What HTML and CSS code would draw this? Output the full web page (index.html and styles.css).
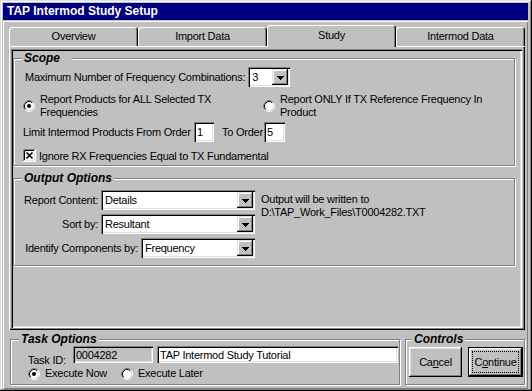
FILE: index.html
```html
<!DOCTYPE html>
<html lang="en">
<head>
    <meta charset="UTF-8">
    <title>TAP Intermod Study Setup</title>
    <link rel="stylesheet" href="styles.css">
</head>
<body>
<div class="window">
    <div class="titlebar">TAP Intermod Study Setup</div>
    <div class="client">
        <div class="tabs">
            <div class="tab">Overview</div>
            <div class="tab">Import Data</div>
            <div class="tab active">Study</div>
            <div class="tab">Intermod Data</div>
        </div>
        <div class="tabpage">
            <div class="page-frame">
                <div class="group scope">
                    <span class="group-title">Scope</span>
                    <div class="row combo-row">
                        <span class="max-label">Maximum Number of Frequency Combinations:</span>
                        <div class="combo w-small">
                            <span class="combo-text">3</span>
                            <span class="drop"><svg width="7" height="4" viewBox="0 0 7 4"><path d="M0 0h7v1h-1v1h-1v1h-1v1h-1v-1h-1v-1h-1v-1h-1z"/></svg></span>
                        </div>
                    </div>
                    <div class="row radio-row">
                        <label class="radio first">
                            <svg class="radio-icon" width="12" height="12" viewBox="0 0 12 12"><circle cx="6" cy="6" r="4.5" fill="#fff"/><path d="M2.11 9.89A5.5 5.5 0 0 1 9.89 2.11" stroke="#808080" fill="none"/><path d="M9.89 2.11A5.5 5.5 0 0 1 2.11 9.89" stroke="#fff" fill="none"/><path d="M2.82 9.18A4.5 4.5 0 0 1 9.18 2.82" stroke="#000" fill="none"/><path d="M9.18 2.82A4.5 4.5 0 0 1 2.82 9.18" stroke="#dfdfdf" fill="none"/><circle cx="6" cy="6" r="2" fill="#000"/></svg>
                            <span>Report Products for ALL Selected TX<br>Frequencies</span>
                        </label>
                        <label class="radio">
                            <svg class="radio-icon" width="12" height="12" viewBox="0 0 12 12"><circle cx="6" cy="6" r="4.5" fill="#fff"/><path d="M2.11 9.89A5.5 5.5 0 0 1 9.89 2.11" stroke="#808080" fill="none"/><path d="M9.89 2.11A5.5 5.5 0 0 1 2.11 9.89" stroke="#fff" fill="none"/><path d="M2.82 9.18A4.5 4.5 0 0 1 9.18 2.82" stroke="#000" fill="none"/><path d="M9.18 2.82A4.5 4.5 0 0 1 2.82 9.18" stroke="#dfdfdf" fill="none"/></svg>
                            <span>Report ONLY If TX Reference Frequency In<br>Product</span>
                        </label>
                    </div>
                    <div class="row order-row">
                        <span class="from-label">Limit Intermod Products From Order</span>
                        <span class="textbox order-box">1</span>
                        <span class="to-label">To Order</span>
                        <span class="textbox order-box wide">5</span>
                    </div>
                    <div class="row check-row">
                        <svg class="check-icon" width="13" height="13" viewBox="0 0 13 13"><rect x="0" y="0" width="13" height="13" fill="#fff"/><path d="M0.5 12V0.5H12" stroke="#808080" fill="none"/><path d="M1.5 11V1.5H11" stroke="#000" fill="none"/><path d="M0 12.5H12.5V0" stroke="#fff" fill="none"/><path d="M1 11.5H11.5V1" stroke="#dfdfdf" fill="none"/><path d="M3.5 3.5L9.5 9.5M9.5 3.5L3.5 9.5" stroke="#000" stroke-width="1.7"/></svg>
                        <span>Ignore RX Frequencies Equal to TX Fundamental</span>
                    </div>
                </div>

                <div class="group output">
                    <span class="group-title">Output Options</span>
                    <div class="output-fields">
                        <div class="row field-row">
                            <span>Report Content:</span>
                            <div class="combo w-wide">
                                <span class="combo-text">Details</span>
                                <span class="drop"><svg width="7" height="4" viewBox="0 0 7 4"><path d="M0 0h7v1h-1v1h-1v1h-1v1h-1v-1h-1v-1h-1v-1h-1z"/></svg></span>
                            </div>
                        </div>
                        <div class="row field-row">
                            <span>Sort by:</span>
                            <div class="combo w-wide">
                                <span class="combo-text">Resultant</span>
                                <span class="drop"><svg width="7" height="4" viewBox="0 0 7 4"><path d="M0 0h7v1h-1v1h-1v1h-1v1h-1v-1h-1v-1h-1v-1h-1z"/></svg></span>
                            </div>
                        </div>
                        <div class="row field-row">
                            <span>Identify Components by:</span>
                            <div class="combo w-mid">
                                <span class="combo-text">Frequency</span>
                                <span class="drop"><svg width="7" height="4" viewBox="0 0 7 4"><path d="M0 0h7v1h-1v1h-1v1h-1v1h-1v-1h-1v-1h-1v-1h-1z"/></svg></span>
                            </div>
                        </div>
                    </div>
                    <div class="output-note">Output will be written to<br>D:\TAP_Work_Files\T0004282.TXT</div>
                </div>
            </div>
        </div>

        <div class="bottom">
            <div class="group task">
                <span class="group-title">Task Options</span>
                <div class="row task-row">
                    <span class="task-label">Task ID:</span>
                    <span class="textbox task-id">0004282</span>
                    <span class="textbox task-name">TAP Intermod Study Tutorial</span>
                </div>
                <div class="row exec-row">
                    <label class="radio exec-now">
                        <svg class="radio-icon" width="12" height="12" viewBox="0 0 12 12"><circle cx="6" cy="6" r="4.5" fill="#fff"/><path d="M2.11 9.89A5.5 5.5 0 0 1 9.89 2.11" stroke="#808080" fill="none"/><path d="M9.89 2.11A5.5 5.5 0 0 1 2.11 9.89" stroke="#fff" fill="none"/><path d="M2.82 9.18A4.5 4.5 0 0 1 9.18 2.82" stroke="#000" fill="none"/><path d="M9.18 2.82A4.5 4.5 0 0 1 2.82 9.18" stroke="#dfdfdf" fill="none"/><circle cx="6" cy="6" r="2" fill="#000"/></svg>
                        <span>Execute Now</span>
                    </label>
                    <label class="radio">
                        <svg class="radio-icon" width="12" height="12" viewBox="0 0 12 12"><circle cx="6" cy="6" r="4.5" fill="#fff"/><path d="M2.11 9.89A5.5 5.5 0 0 1 9.89 2.11" stroke="#808080" fill="none"/><path d="M9.89 2.11A5.5 5.5 0 0 1 2.11 9.89" stroke="#fff" fill="none"/><path d="M2.82 9.18A4.5 4.5 0 0 1 9.18 2.82" stroke="#000" fill="none"/><path d="M9.18 2.82A4.5 4.5 0 0 1 2.82 9.18" stroke="#dfdfdf" fill="none"/></svg>
                        <span>Execute Later</span>
                    </label>
                </div>
            </div>
            <div class="group controls">
                <span class="group-title">Controls</span>
                <button class="btn cancel" type="button">Ca<u>n</u>cel</button>
                <button class="btn default" type="button"><span class="focus">C<u>o</u>ntinue</span></button>
            </div>
        </div>
    </div>
</div>
</body>
</html>
```

FILE: styles.css
```css
body {
    margin: 0;
    font-family: "Liberation Sans", Arial, sans-serif;
    font-size: 11px;
    letter-spacing: -0.25px;
    color: #000;
    background-color: #c0c0c0;
    white-space: nowrap;
}

.window {
    width: 532px;
    height: 391px;
    box-sizing: border-box;
    padding: 3px 4px 2px 3px;
    background-color: #c0c0c0;
    box-shadow: inset -1px -1px #000, inset 1px 1px #dfdfdf, inset -2px -2px #808080, inset 2px 2px #fff;
    display: flex;
    flex-direction: column;
}

.titlebar {
    height: 17px;
    line-height: 17px;
    padding-left: 4px;
    background-color: #000080;
    color: #fff;
    font-weight: bold;
    font-size: 12px;
    letter-spacing: 0;
}

.client {
    flex: 1;
    margin-top: 1px;
    padding: 4px 0 0 6px;
    box-shadow: inset 1px 1px #fff, inset -1px -1px #808080;
}

/* tabs */
.tabs {
    display: flex;
    align-items: flex-end;
    height: 21px;
}

.tab {
    width: 129px;
    height: 19px;
    box-sizing: border-box;
    padding-top: 3px;
    text-align: center;
    border-radius: 3px 3px 0 0;
    box-shadow: inset 1px 1px #fff, inset -1px 0 #000, inset -2px 0 #808080;
}

.tab.active {
    position: relative;
    z-index: 1;
    height: 22px;
    margin-bottom: -1px;
    padding-top: 4px;
    background-color: #c0c0c0;
}

.tabpage {
    width: 516px;
    height: 284px;
    box-sizing: border-box;
    padding: 3px 3px 2px 2px;
    box-shadow: inset 1px 1px #fff, inset -1px -1px #000, inset -2px -2px #808080;
}

.page-frame {
    height: 100%;
    box-sizing: border-box;
    padding: 9px 0 0 2px;
    box-shadow: inset 1px 1px #808080, inset 2px 2px #000, inset -1px -1px #fff, inset -2px -2px #dfdfdf;
}

/* group boxes */
.group {
    position: relative;
    box-sizing: border-box;
    border: 1px solid #808080;
    box-shadow: inset 1px 1px #fff, 1px 1px #fff;
}

.group-title {
    position: absolute;
    top: -7px;
    left: 8px;
    padding: 0 2px;
    line-height: 13px;
    font-size: 12px;
    font-weight: bold;
    font-style: italic;
    letter-spacing: 0;
    background-color: #c0c0c0;
}

.row {
    display: flex;
    align-items: center;
}

.row > * {
    flex: none;
}

.scope {
    width: 502px;
    height: 108px;
    padding: 8px 0 0 10px;
}

.scope .group-title {
    padding-right: 12px;
}

.combo-row {
    height: 20px;
}

.max-label {
    margin-left: 1px;
    margin-right: 3px;
}

.radio {
    display: flex;
    align-items: center;
    line-height: 13px;
}

.radio-icon {
    flex: none;
    margin-right: 5px;
}

.radio-row {
    margin-top: 6px;
}

.radio.first {
    width: 240px;
    margin-left: -1px;
}

.order-row {
    margin-top: 3px;
    height: 20px;
}

.from-label {
    width: 171px;
    margin-left: -1px;
}

.to-label {
    width: 42px;
    margin-left: 8px;
}

.check-row {
    margin-top: 7px;
    height: 13px;
    margin-left: -1px;
}

.check-icon {
    margin-right: 3px;
}

/* inputs */
.textbox {
    display: flex;
    align-items: center;
    box-sizing: border-box;
    padding: 0 2px 0 3px;
    background-color: #fff;
    box-shadow: inset 1px 1px #808080, inset 2px 2px #000, inset -1px -1px #fff, inset -2px -2px #dfdfdf;
}

.order-box {
    width: 20px;
    height: 20px;
}

.order-box.wide {
    width: 21px;
}

.combo {
    display: flex;
    align-items: center;
    box-sizing: border-box;
    height: 20px;
    padding: 2px;
    background-color: #fff;
    box-shadow: inset 1px 1px #808080, inset 2px 2px #000, inset -1px -1px #fff, inset -2px -2px #dfdfdf;
}

.combo-text {
    flex: 1;
    padding-left: 2px;
}

.drop {
    width: 16px;
    height: 16px;
    display: flex;
    align-items: center;
    justify-content: center;
    background-color: #c0c0c0;
    box-shadow: inset -1px -1px #000, inset 1px 1px #dfdfdf, inset -2px -2px #808080, inset 2px 2px #fff;
}

.drop svg {
    margin-top: 1px;
    shape-rendering: crispEdges;
}

.w-small {
    width: 42px;
}

.w-wide {
    width: 154px;
}

.w-mid {
    width: 114px;
}

.output {
    display: flex;
    width: 502px;
    height: 88px;
    margin-top: 12px;
    padding: 11px 0 0 10px;
}

.output-fields {
    display: flex;
    flex-direction: column;
    align-items: flex-end;
    gap: 4px;
    width: 231px;
}

.field-row {
    gap: 3px;
}

.output-note {
    margin-left: 6px;
    padding-top: 3px;
    line-height: 13px;
}

/* bottom area */
.bottom {
    display: flex;
    margin-top: 9px;
}

.task {
    width: 390px;
    height: 46px;
    margin-left: 1px;
    padding: 6px 0 0 17px;
}

.task-row {
    align-items: flex-end;
}

.task-label {
    width: 45px;
    margin-bottom: -3px;
}

.task-id {
    width: 80px;
    height: 17px;
    background-color: #c0c0c0;
}

.task-name {
    width: 241px;
    height: 17px;
    margin-left: 4px;
}

.exec-row {
    margin-top: 4px;
}

.exec-now {
    width: 93px;
}

.controls {
    display: flex;
    align-items: flex-start;
    width: 120px;
    height: 46px;
    margin-left: 5px;
    padding: 7px 0 0 3px;
}

.controls .group-title {
    left: 6px;
}

.btn {
    flex: none;
    font-family: inherit;
    font-size: 11px;
    letter-spacing: -0.25px;
    height: 30px;
    padding: 0;
    border: none;
    background-color: #c0c0c0;
    color: #000;
    box-shadow: inset -1px -1px #000, inset 1px 1px #fff, inset -2px -2px #808080, inset 2px 2px #dfdfdf;
}

.btn.cancel {
    width: 53px;
}

.btn.default {
    width: 55px;
    margin-left: 6px;
    border: 1px solid #000;
    padding: 3px;
}

.focus {
    display: flex;
    align-items: center;
    justify-content: center;
    height: 100%;
    border: 1px dotted #000;
    box-sizing: border-box;
}
```
